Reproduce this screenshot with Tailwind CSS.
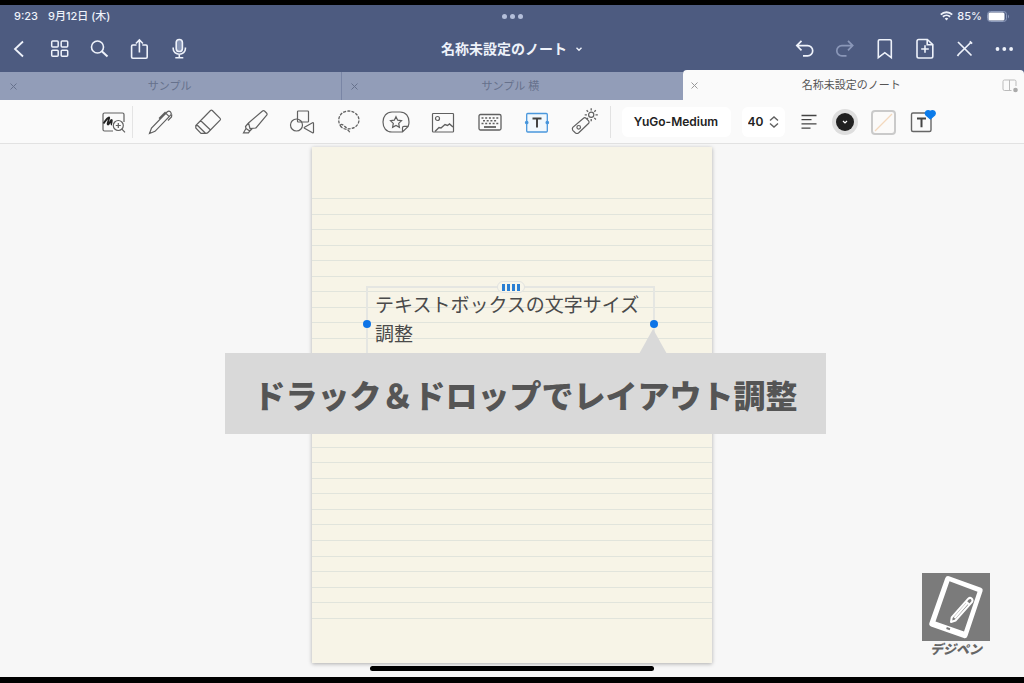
<!DOCTYPE html>
<html lang="ja">
<head>
<meta charset="utf-8">
<meta name="viewport" content="width=device-width, initial-scale=1">
<title>名称未設定のノート</title>
<script src="https://cdn.jsdelivr.net/npm/@tailwindcss/browser@4"></script>
</head>
<body class="flex min-h-screen flex-col border-t-[5px] border-b-[6px] border-black bg-[#f7f7f7] font-['Inter','Noto_Sans_CJK_JP',sans-serif] text-[#333]">

<header class="bg-[#4d5b80] text-[#eef2fa]">
  <!-- Status bar -->
  <div class="grid h-[22px] grid-cols-3 items-center px-[14px] text-[11px] font-medium">
    <div class="flex gap-[10px]"><span>9:23</span><span>9月12日 (木)</span></div>
    <div class="flex justify-center gap-[3px]" aria-hidden="true">
      <span class="size-[5px] rounded-full bg-[#b4bfda]"></span><span class="size-[5px] rounded-full bg-[#b4bfda]"></span><span class="size-[5px] rounded-full bg-[#b4bfda]"></span>
    </div>
    <div class="flex items-center justify-end gap-1">
      <svg class="h-[10px] w-[13px]" viewBox="0 0 13 10" fill="none" stroke="currentColor" stroke-width="1.9"><path d="M.8 3.6a8.2 8.2 0 0 1 11.4 0M2.9 5.8a5.2 5.2 0 0 1 7.2 0"/><path d="M6.5 9.4 4.7 7.6a2.6 2.6 0 0 1 3.6 0z" fill="currentColor" stroke="none"/></svg>
      <span>85%</span>
      <svg class="h-[11px] w-6" viewBox="0 0 24 11"><rect x="1.5" y=".5" width="19" height="10" rx="3" fill="none" stroke="#8c9aba"/><rect x="2.5" y="1.500" width="16" height="8" rx="1.5" fill="#fff"/><path d="M22 3.5q2 2 0 4z" fill="#8c9aba"/></svg>
    </div>
  </div>
  <!-- Navigation bar -->
  <nav class="grid h-[43px] grid-cols-[1fr_auto_1fr] items-center">
    <div class="flex">
      <button class="grid w-10 place-items-center" aria-label="戻る"><svg class="size-6" viewBox="0 0 24 24" fill="none" stroke="currentColor" stroke-width="1.8"><path d="m15 4.500-8 7.5 8 7.5"/></svg></button>
      <button class="grid w-10 place-items-center" aria-label="一覧"><svg class="size-6" viewBox="0 0 24 24" fill="none" stroke="currentColor" stroke-width="1.5"><rect x="3.700" y="4" width="6.500" height="6" rx="1"/><rect x="13.200" y="4" width="6.500" height="6" rx="1"/><rect x="3.700" y="13.300" width="6.500" height="6" rx="1"/><rect x="13.200" y="13.300" width="6.500" height="6" rx="1"/></svg></button>
      <button class="grid w-10 place-items-center" aria-label="検索"><svg class="size-6" viewBox="0 0 24 24" fill="none" stroke="currentColor" stroke-width="1.6"><circle cx="9.500" cy="10" r="6"/><path d="m13.800 14.300 5.700 5.200" stroke-width="2"/></svg></button>
      <button class="grid w-10 place-items-center" aria-label="共有"><svg class="size-6" viewBox="0 0 24 24" fill="none" stroke="currentColor" stroke-width="1.6"><path d="M8.500 8H4.800q-1.200 0-1.200 1.200V20q0 1.200 1.200 1.200h13.200q1.200 0 1.200-1.200V9.200q0-1.200-1.200-1.200h-3.700M11.400 15.500V3M7.900 6.500l3.500-3.700 3.500 3.700"/></svg></button>
      <button class="grid w-10 place-items-center" aria-label="録音"><svg class="size-6" viewBox="0 0 24 24" fill="none" stroke="currentColor" stroke-width="1.6"><rect x="8.200" y="2.500" width="6.200" height="12" rx="3.100" fill="#8795b5"/><path d="M5.200 10.500v1.200a6.100 5.500 0 0 0 12.200 0v-1.200M11.300 17.300v3.500M7.300 20.800h8"/></svg></button>
    </div>
    <button class="flex items-center gap-2 text-[14px] leading-5 font-bold"><span>名称未設定のノート</span><svg class="size-2" viewBox="0 0 8 8" fill="none" stroke="currentColor" stroke-width="1.400"><path d="m1.500 2.700 2.500 2.500 2.500-2.500"/></svg></button>
    <div class="flex justify-end">
      <button class="grid w-10 place-items-center" aria-label="元に戻す"><svg class="size-6" viewBox="0 0 24 24" fill="none" stroke="currentColor" stroke-width="1.700"><path d="M9.500 3.800 4.800 8.600l4.700 4.800M5 8.600h10.600a5.100 5.100 0 0 1 0 10.200H11"/></svg></button>
      <button class="grid w-10 place-items-center text-[#8a97b8]" aria-label="やり直す"><svg class="size-6" viewBox="0 0 24 24" fill="none" stroke="currentColor" stroke-width="1.700"><path d="m16 3.800 4.700 4.800-4.700 4.800M20.500 8.600H9.900a5.100 5.100 0 0 0 0 10.200h4.600"/></svg></button>
      <button class="grid w-10 place-items-center" aria-label="ブックマーク"><svg class="size-6" viewBox="0 0 24 24" fill="none" stroke="currentColor" stroke-width="1.600"><path d="M6.300 20.700V4q0-1.200 1.200-1.200h10.600q1.200 0 1.200 1.200v16.700l-6.500-5z"/></svg></button>
      <button class="grid w-10 place-items-center" aria-label="ページを追加"><svg class="size-6" viewBox="0 0 24 24" fill="none" stroke="currentColor" stroke-width="1.600"><path d="M6.700 2.500h8.600l5.500 5.200v11.600q0 1.700-1.700 1.700H6.700Q5 21 5 19.300V4.200q0-1.700 1.700-1.700zM15.200 2.700v5.100h5.400M13 8.200v7.600M9.200 12H16.800"/></svg></button>
      <button class="grid w-10 place-items-center" aria-label="閲覧モード"><svg class="size-6" viewBox="0 0 24 24" fill="none" stroke="currentColor" stroke-width="1.700"><path d="m6 5 13.500 13.500M19.300 5 6.500 17.500l-1 1.500M17.800 4.300l2.300 2.300"/></svg></button>
      <button class="grid w-10 place-items-center" aria-label="その他"><svg class="size-6" viewBox="0 0 24 24" fill="currentColor"><circle cx="5.500" cy="12" r="1.900"/><circle cx="12.300" cy="12" r="1.900"/><circle cx="19.100" cy="12" r="1.900"/></svg></button>
    </div>
  </nav>
  <!-- Document tabs -->
  <div class="grid h-[30px] grid-cols-3 items-end text-[11px]">
    <div class="flex h-[28px] items-center bg-[#929db8] pt-px text-[#66718c]">
      <button class="grid w-[26px] place-items-center" aria-label="サンプルを閉じる"><svg class="size-[7px]" viewBox="0 0 7 7" stroke="currentColor"><path d="m.5.500 6 6m0-6-6 6"/></svg></button>
      <a href="#" class="flex-1 pr-7 text-center">サンプル</a>
    </div>
    <div class="flex h-[28px] items-center border-l border-l-[#7985a5] bg-[#929db8] pt-px text-[#66718c]">
      <button class="grid w-6 place-items-center" aria-label="サンプル 横を閉じる"><svg class="size-[7px]" viewBox="0 0 7 7" stroke="currentColor"><path d="m.5.500 6 6m0-6-6 6"/></svg></button>
      <a href="#" class="flex-1 pr-7 text-center">サンプル 横</a>
    </div>
    <div class="flex h-[30px] items-center rounded-t-[4px] bg-[#fafafa] pt-px text-[#555]">
      <button class="grid w-6 place-items-center text-[#999]" aria-label="名称未設定のノートを閉じる"><svg class="size-[7px]" viewBox="0 0 7 7" stroke="currentColor"><path d="m.5.500 6 6m0-6-6 6"/></svg></button>
      <a href="#" class="flex-1 text-center">名称未設定のノート</a>
      <button class="grid w-7 place-items-center text-[#bbb]" aria-label="分割表示"><svg class="size-4" viewBox="0 0 16 16" fill="none" stroke="currentColor"><path d="M9.500 12.500h-7q-1.500 0-1.500-1.500V3.500Q1 2 2.500 2h10Q14 2 14 3.500V8M7.500 2v10.500"/><circle cx="13.500" cy="12" r="2.300" fill="#aaa" stroke="none"/></svg></button>
    </div>
  </div>
</header>

<!-- Toolbar -->
<div class="flex h-[44px] items-center justify-center border-b border-[#e2e2e2] bg-[#fafafa] pt-px pl-2 text-[#606060]" role="toolbar">
  <button class="grid w-8 place-items-center" aria-label="ズーム"><svg class="h-6 w-7" viewBox="0 0 28 24" fill="none" stroke="currentColor" stroke-width="1.200"><path d="M14 21H5.500Q4 21 4 19.500v-15Q4 3 5.500 3h18Q25 3 25 4.500V12"/><path d="M4.500 13.500c2-3 4.500-6 5.500-6s-2.500 7-1 7 2.500-4.500 3.500-4.500-1 4.500.500 4.500" stroke="#222" stroke-width="1.800"/><circle cx="19.300" cy="15.500" r="5"/><path d="M19.300 13v5M16.800 15.500h5M22.900 19.100l3.100 3.200"/></svg></button>
  <span class="ml-[3px] h-8 w-px bg-[#e4e4e4]"></span>
  <div class="ml-[5px] flex">
    <button class="grid w-[47px] place-items-center" aria-label="ペン"><svg class="size-7" viewBox="0 0 28 28" fill="none" stroke="currentColor" stroke-width="1.200"><path d="m2.500 25.500 2-5.500L20.300 3.800q1.600-1.300 3.200.1 1.500 1.600.100 3.200L8 23.300zM19 5.300l3.500 3.500M18.500 4l-6.500 6.500M24.800 6.500l-.3 2.500-3.500 3.500"/></svg></button>
    <button class="grid w-[47px] place-items-center" aria-label="消しゴム"><svg class="size-7" viewBox="0 0 28 28" fill="none" stroke="currentColor" stroke-width="1.200"><path d="M16.500 2.500q.9-.8 1.800 0l7.800 7.800q.8.900 0 1.800L14 24.500q-.8.900-2 .9H7L1.800 20v-2.500zM6.500 12.500l10 9.500M1.800 17.700h2l7.700 7.500"/></svg></button>
    <button class="grid w-[47px] place-items-center" aria-label="蛍光ペン"><svg class="size-7" viewBox="0 0 28 28" fill="none" stroke="currentColor" stroke-width="1.200"><path d="M21.500 3q1-.8 2 0l2 2q1 1 .2 2.200L15 20l-6 .5L7.500 15zM7.500 15 4.500 18.500l.5 2-2.500 4.300h5l1.300-1.800L11.500 20.300M5 20.500l3.700 2.500"/></svg></button>
    <button class="grid w-[47px] place-items-center" aria-label="図形"><svg class="size-7" viewBox="0 0 28 28" fill="none" stroke="currentColor" stroke-width="1.200"><circle cx="8.500" cy="17" r="6"/><rect x="9.500" y="3" width="11" height="11" rx=".8"/><path d="m16.500 19.300 8-4.500q1-.4 1 .7v8.700q0 1-1 .5l-8-4.500q-.7-.5 0-.9z"/></svg></button>
    <button class="grid w-[47px] place-items-center" aria-label="なげなわ"><svg class="size-7" viewBox="0 0 28 28" fill="none" stroke="currentColor" stroke-width="1.300"><path d="M6.500 19C1.500 14 3.500 5 11 3.300s14 4 12.800 10.200S16 21 13.500 20.800 8 15.500 6 16.500s.5 3.500 4 4.500 4.500 2.500 5 4" stroke-dasharray="3 1.200"/></svg></button>
    <button class="grid w-[47px] place-items-center" aria-label="ステッカー"><svg class="size-7" viewBox="0 0 28 28" fill="none" stroke="currentColor" stroke-width="1.200"><path d="M20.500 24H10C4 24 1 19.500 1 14S4.500 4 10 4h8c6 0 9 4.500 9 10 0 1.800-.3 3-.8 4.300zM20.500 24v-4.300q0-1.400 1.500-1.400h4.200"/><path d="m14 8.700 1.700 3.500 3.800.5-2.800 2.700.700 3.900-3.400-1.900-3.400 1.900.700-3.900-2.800-2.700 3.800-.5z"/></svg></button>
    <button class="grid w-[47px] place-items-center" aria-label="画像"><svg class="size-7" viewBox="0 0 28 28" fill="none" stroke="currentColor" stroke-width="1.200"><rect x="3.500" y="5.500" width="21" height="18.500" rx=".8"/><circle cx="8.500" cy="10.500" r="2"/><path d="m6 23.500 4-4 2 .5 4-3.500 2.500 1 2-1.500 3.500 3" stroke-width="1.400"/></svg></button>
    <button class="grid w-[47px] place-items-center" aria-label="キーボード"><svg class="size-7" viewBox="0 0 28 28" fill="none" stroke="currentColor" stroke-width="1.300"><rect x="3" y="6.500" width="22" height="15.500" rx="1.500"/><path d="M5.500 10h17M5.500 15.500h17" stroke-dasharray="2 1.700" stroke-width="1.600"/><path d="M7 12.800h14" stroke-dasharray="2 1.700" stroke-width="1.600"/><path d="M8 19h12" stroke-width="1.800"/></svg></button>
    <button class="grid w-[47px] place-items-center" aria-label="テキスト" aria-pressed="true"><svg class="size-7" viewBox="0 0 28 28" fill="none" stroke="#4a97dc" stroke-width="1.300"><rect x="3.700" y="5.500" width="20.600" height="18.500" rx="1" fill="#f1f8fd"/><circle cx="3.700" cy="14.500" r="1.200" fill="#3e8fd8"/><circle cx="24.300" cy="14.500" r="1.200" fill="#3e8fd8"/><path d="M9.500 10.500h9M14 10.500v9" stroke="#444" stroke-width="2"/></svg></button>
    <button class="grid w-[47px] place-items-center" aria-label="レーザーポインター"><svg class="size-7" viewBox="0 0 28 28" fill="none" stroke="currentColor" stroke-width="1.200"><path d="M13.500 10.200q1.300-1 2.600.1l2.500 2.500q1 1.200.1 2.500L8.500 25q-1.500 1-3 0l-2.700-2.700q-1-1.500 0-3z"/><circle cx="8.700" cy="19.300" r="1.800"/><circle cx="21.200" cy="6.800" r="2.600"/><path d="M21.200.300v2.200M21.200 11v2.300M14.700 6.800h2.200M25.500 6.800h2.300M16.600 2.200l1.500 1.500M24.300 9.900l1.600 1.600M25.800 2.200l-1.500 1.500M17 11l1-1" stroke-width="1.300"/></svg></button>
  </div>
  <span class="ml-[2px] h-8 w-px bg-[#e2e2e2]"></span>
  <button class="ml-[11px] h-[30px] w-[109px] rounded-md bg-white text-[12px] font-semibold text-[#222]">YuGo-Medium</button>
  <div class="ml-[11px] flex h-[30px] w-[43px] items-center justify-center gap-[3px] rounded-md bg-white">
    <input class="w-[18px] bg-transparent text-[12px] font-semibold text-[#222]" type="text" inputmode="numeric" value="40" aria-label="文字サイズ">
    <button aria-label="文字サイズを変更"><svg class="h-3 w-[10px]" viewBox="0 0 10 12" fill="none" stroke="currentColor" stroke-width="1.400"><path d="m1 4.500 4-3.500 4 3.500M1 7.500 5 11l4-3.500"/></svg></button>
  </div>
  <button class="ml-4 grid w-4 place-items-center" aria-label="行揃え"><svg class="size-4" viewBox="0 0 16 16" stroke="#444" stroke-width="1.300"><path d="M.5 1.500h15M.5 5.700h10M.5 9.900h15M.5 14.100h9"/></svg></button>
  <button class="ml-[15px] grid size-[26px] place-items-center rounded-full bg-[#dedede]" aria-label="文字色"><span class="grid size-[18px] place-items-center rounded-full bg-[#202020]"><svg class="size-[6px]" viewBox="0 0 6 6" fill="none" stroke="#fff" stroke-width="1.200"><path d="m1 2 2 2 2-2"/></svg></span></button>
  <button class="ml-[13px] grid size-[25px] place-items-center rounded-[4px] border-2 border-[#cacaca] bg-[#fbfaf9]" aria-label="背景色"><svg class="size-[19px]" viewBox="0 0 19 19" stroke="#f3d9bd" stroke-width="1.200"><path d="M1 18 18 1"/></svg></button>
  <button class="ml-[12px] grid w-7 place-items-center" aria-label="テキストスタイル"><svg class="size-7" viewBox="0 0 28 28" fill="none" stroke="#666" stroke-width="1.400"><rect x="3.500" y="5" width="19.500" height="18.500" rx="1.500"/><path d="M9 10.500h9M13.500 10.500v8.700" stroke="#444" stroke-width="2"/><path d="M22.300 10.800 18 7q-1.300-2 .2-3.600 2-1.500 4.100.2 2.100-1.700 4.100-.2 1.500 1.600.2 3.600z" fill="#0b7bea" stroke="#0b7bea"/></svg></button>
</div>

<!-- Note canvas -->
<main class="relative flex flex-1 flex-col items-center pt-[3px]">
  <section class="relative flex h-[516px] w-[400px] flex-col bg-[#f7f4e7] pt-[51px] pb-[44px] shadow-[0_1px_4px_rgba(0,0,0,0.3)]" aria-label="ノートのページ">
    <div class="flex flex-1 flex-col justify-between" aria-hidden="true">
      <i class="h-px bg-[#e1e4dc]"></i><i class="h-px bg-[#e1e4dc]"></i><i class="h-px bg-[#e1e4dc]"></i><i class="h-px bg-[#e1e4dc]"></i>
      <i class="h-px bg-[#e1e4dc]"></i><i class="h-px bg-[#e1e4dc]"></i><i class="h-px bg-[#e1e4dc]"></i><i class="h-px bg-[#e1e4dc]"></i>
      <i class="h-px bg-[#e1e4dc]"></i><i class="h-px bg-[#e1e4dc]"></i><i class="h-px bg-[#e1e4dc]"></i><i class="h-px bg-[#e1e4dc]"></i>
      <i class="h-px bg-[#e1e4dc]"></i><i class="h-px bg-[#e1e4dc]"></i><i class="h-px bg-[#e1e4dc]"></i><i class="h-px bg-[#e1e4dc]"></i>
      <i class="h-px bg-[#e1e4dc]"></i><i class="h-px bg-[#e1e4dc]"></i><i class="h-px bg-[#e1e4dc]"></i><i class="h-px bg-[#e1e4dc]"></i>
      <i class="h-px bg-[#e1e4dc]"></i><i class="h-px bg-[#e1e4dc]"></i><i class="h-px bg-[#e1e4dc]"></i><i class="h-px bg-[#e1e4dc]"></i>
      <i class="h-px bg-[#e1e4dc]"></i><i class="h-px bg-[#e1e4dc]"></i><i class="h-px bg-[#e1e4dc]"></i><i class="h-px bg-[#e1e4dc]"></i>
    </div>

    <!-- Selected text box with its handles -->
    <div class="absolute top-[139px] left-[54px] w-[289px] border-2 border-[#e5e6e2]">
      <textarea class="block h-[72px] w-full resize-none overflow-hidden bg-transparent pt-px pl-[7px] font-['Noto_Sans_CJK_JP',sans-serif] text-[19px] leading-[29px] font-normal text-[#4a4a4a]" aria-label="テキストボックス">テキストボックスの文字サイズ
調整</textarea>
      <span class="absolute -top-[7px] left-1/2 flex h-3 w-7 -translate-x-1/2 items-center justify-center gap-[2px] rounded-full border border-[#e2e3e0] bg-[#f7f5ea]">
        <i class="h-[7px] w-[3px] bg-[#2b7fd3]"></i><i class="h-[7px] w-[3px] bg-[#2b7fd3]"></i><i class="h-[7px] w-[3px] bg-[#2b7fd3]"></i><i class="h-[7px] w-[3px] bg-[#2b7fd3]"></i>
      </span>
      <span class="absolute top-[32px] -left-[5px] size-2 rounded-full bg-[#0d74e7]"></span>
      <span class="absolute top-[32px] -right-[5px] size-2 rounded-full bg-[#0d74e7]"></span>
    </div>

    <!-- Caption balloon -->
    <div class="absolute top-[206px] -left-[87px] flex h-[81px] w-[601px] items-center justify-center bg-[#d9d9d9]">
      <svg class="absolute -top-[24px] left-[414px] h-[25px] w-7" viewBox="0 0 28 25" fill="#d9d9d9"><path d="M14 0 28 25H0z"/></svg>
      <p class="font-['Noto_Sans_CJK_JP',sans-serif] text-[32px] leading-10 font-black whitespace-nowrap text-[#555]">ドラック＆ドロップでレイアウト調整</p>
    </div>
  </section>
  <div class="mt-[3px] h-[5px] w-[284px] rounded-full bg-black"></div>

  <!-- Site logo -->
  <div class="absolute right-[34px] bottom-[20px] flex w-[68px] flex-col items-center text-[#666]">
    <svg class="size-[68px]" viewBox="0 0 68 68"><rect width="68" height="68" fill="#7b7b7b"/>
      <path fill="#fff" fill-rule="evenodd" d="M27 3.200 59 14.800q2.300 1 1.600 3.300L45.500 63q-1 2.800-3.700 2L9 53.500q-2.400-1-1.600-3.400L23.200 5.300Q24.300 2.400 27 3.200zM27.500 8.200 13.500 48.500 42 58.500 55.500 18.700z"/>
      <path fill="none" stroke="#fff" stroke-width="2" stroke-linejoin="round" d="m29 49 .7-4.500L46.300 25.700q1.600-1.500 3.300-.2 1.600 1.500.5 3.400L33.500 47.500zM44 28.500l3.500 3.200M32.500 45 45.500 30"/>
      <path d="m24.500 55 3.500 1.200" stroke="#777" stroke-width="2"/></svg>
    <span class="font-['Noto_Sans_CJK_JP',sans-serif] text-[13px] leading-4 font-black italic">デジペン</span>
  </div>
</main>
</body>
</html>
